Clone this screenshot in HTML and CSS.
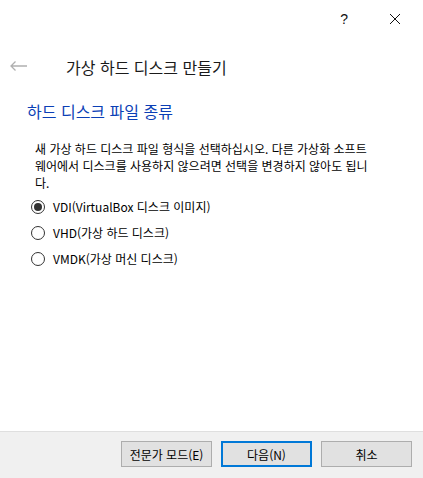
FILE: index.html
```html
<!DOCTYPE html>
<html lang="ko">
<head>
<meta charset="utf-8">
<link rel="stylesheet" href="styles.css">
</head>
<body>
<div class="window">
  <div class="titlebar">
    <span class="help">?</span>
    <span class="close"><svg width="12" height="12" viewBox="0 0 12 12"><path d="M1 1 L11 11 M11 1 L1 11" stroke="#111" stroke-width="1" fill="none"/></svg></span>
  </div>
  <div class="header">
    <span class="back"><svg width="18" height="10" viewBox="0 0 18 10"><path d="M1 5 H17 M5.5 0.5 L1 5 L5.5 9.5" stroke="#b0b0b0" stroke-width="1.3" fill="none"/></svg></span>
    <span class="title">가상 하드 디스크 만들기</span>
  </div>
  <div class="content">
    <h2 class="section">하드 디스크 파일 종류</h2>
    <p class="desc">새 가상 하드 디스크 파일 형식을 선택하십시오. 다른 가상화 소프트<br>웨어에서 디스크를 사용하지 않으려면 선택을 변경하지 않아도 됩니<br>다.</p>
    <div class="options">
      <label class="opt"><span class="radio checked"></span><span>VDI(VirtualBox 디스크 이미지)</span></label>
      <label class="opt"><span class="radio"></span><span>VHD(가상 하드 디스크)</span></label>
      <label class="opt"><span class="radio"></span><span>VMDK(가상 머신 디스크)</span></label>
    </div>
  </div>
  <div class="footer">
    <button class="btn">전문가 모드(E)</button>
    <button class="btn default">다음(N)</button>
    <button class="btn">취소</button>
  </div>
</div>
</body>
</html>
```
FILE: styles.css
```css
html, body {
  margin: 0;
  padding: 0;
  background: #fff;
}
body {
  font-family: "Noto Sans CJK KR", "Noto Sans", sans-serif;
  color: #000;
}
.window {
  width: 423px;
  height: 478px;
  display: flex;
  flex-direction: column;
  background: #fff;
}
.titlebar {
  height: 38px;
  display: flex;
  align-items: center;
  justify-content: flex-end;
  padding-right: 22px;
  gap: 41px;
}
.help {
  font-family: "Liberation Sans", sans-serif;
  font-size: 14px;
  line-height: 14px;
  color: #111;
}
.close {
  display: flex;
  width: 12px;
  height: 12px;
}
.header {
  height: 56px;
  display: flex;
  align-items: center;
  padding-left: 10px;
}
.back {
  display: flex;
  width: 18px;
  margin-right: 38px;
}
.title {
  font-size: 16px;
  line-height: 20px;
  color: #1a1a1a;
  margin-top: 1px;
}
.content {
  padding-left: 27px;
}
.section {
  margin: 6px 0 0 0;
  font-size: 16px;
  font-weight: normal;
  line-height: 22px;
  color: #0b3fb6;
}
.desc {
  margin: 18px 0 0 8px;
  font-size: 12px;
  line-height: 17px;
}
.options {
  margin-top: 7px;
  display: flex;
  flex-direction: column;
  gap: 8px;
  padding-left: 4px;
}
.opt {
  display: flex;
  align-items: center;
  gap: 8px;
  font-size: 12px;
  line-height: 18px;
}
.radio {
  width: 14px;
  height: 14px;
  border: 1px solid #333;
  border-radius: 50%;
  box-sizing: border-box;
  display: flex;
  align-items: center;
  justify-content: center;
  background: #fff;
}
.radio.checked::after {
  content: "";
  width: 8px;
  height: 8px;
  border-radius: 50%;
  background: #333;
}
.footer {
  margin-top: auto;
  height: 47px;
  box-sizing: border-box;
  background: #f0f0f0;
  border-top: 1px solid #dfdfdf;
  display: flex;
  justify-content: flex-end;
  align-items: flex-start;
  padding: 9px 11px 0 0;
  gap: 9px;
}
.btn {
  width: 91px;
  height: 26px;
  box-sizing: border-box;
  background: #e1e1e1;
  border: 1px solid #adadad;
  font-family: "Noto Sans CJK KR", sans-serif;
  font-size: 12px;
  padding: 0;
  color: #000;
}
.btn.default {
  border: 2px solid #0078d7;
}
```
